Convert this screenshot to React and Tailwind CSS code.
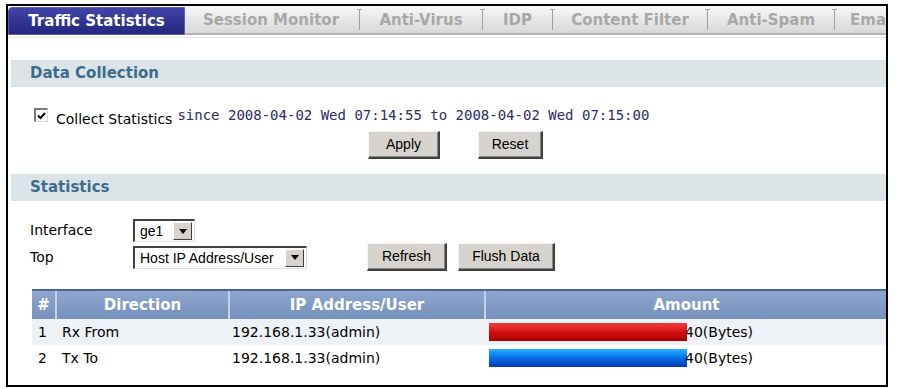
import React from "react";

const tabs = [
    { label: "Session Monitor", w: "w-[177px]" },
    { label: "Anti-Virus", w: "w-[123px]" },
    { label: "IDP", w: "w-[70px]" },
    { label: "Content Filter", w: "w-[155px]" },
    { label: "Anti-Spam", w: "w-[127px]" },
    { label: "Email Report", w: "w-[140px]" },
];

const rows = [
    { n: 1, dir: "Rx From", ip: "192.168.1.33(admin)", bar: "from-[#f23a3a] via-[#d41010] to-[#a80000]", bg: "bg-[#eef1f6]" },
    { n: 2, dir: "Tx To", ip: "192.168.1.33(admin)", bar: "from-[#2ab0ff] via-[#0a6ee8] to-[#0638b8]", bg: "bg-white" },
];

function Sep() {
    return (
        <div className="flex flex-col items-center w-[5px] h-full pt-[2px] pb-[3px] shrink-0">
            <div className="h-[1px] w-[5px] bg-[#a0a0a0]" />
            <div className="flex-1 w-[1px] bg-[#a0a0a0]" />
        </div>
    );
}

function Button({ children, w }) {
    return (
        <button
            className={`${w} h-[28px] bg-[#d6d3ce] border-t border-l border-t-[#f4f4f4] border-l-[#f4f4f4] border-r-2 border-b-2 border-r-[#404040] border-b-[#404040] shadow-[inset_-1px_-1px_0_#8a8a8a] font-['Liberation_Sans',Arial,sans-serif] text-[14px] text-black`}
        >
            {children}
        </button>
    );
}

function Select({ value, w }) {
    return (
        <div
            className={`${w} h-[23px] flex items-center bg-white border-t-2 border-l-2 border-t-[#404040] border-l-[#404040] border-r border-b border-r-[#e0e0e0] border-b-[#e0e0e0]`}
        >
            <span className="flex-1 pl-[5px] font-['Liberation_Sans',Arial,sans-serif] text-[14px] leading-none">
                {value}
            </span>
            <div className="w-[19px] h-[18px] mr-[2px] flex items-center justify-center bg-[#d6d3ce] border-t border-l border-t-white border-l-white border-r border-b border-r-[#404040] border-b-[#404040]">
                <svg width="8" height="5" viewBox="0 0 8 5">
                    <path d="M0 0h8L4 5z" fill="#000" />
                </svg>
            </div>
        </div>
    );
}

function SectionBar({ title }) {
    return (
        <div className="ml-[3px] h-[27px] flex items-center pl-[19px] bg-[#dde4e8] text-[#3d6c8d] font-bold text-[15px]">
            {title}
        </div>
    );
}

export default function App() {
    return (
        <div className="w-[898px] h-[389px] bg-white overflow-hidden font-['DejaVu_Sans',Verdana,sans-serif] text-[14px] text-black">
            <div className="h-[4px]" />
            <div className="ml-[6px] w-[882px] h-[383px] border-2 border-black flex flex-col overflow-hidden">
                {/* tabs */}
                <div className="mt-[1px] h-[28px] flex shrink-0 overflow-hidden">
                    <div className="w-[177px] shrink-0 flex items-center justify-center rounded-tl-[4px] bg-linear-to-b from-[#4245a8] to-[#24267e] border border-[#5a5db8] text-white font-bold text-[15px]">
                        Traffic Statistics
                    </div>
                    {tabs.map((t) => (
                        <div
                            key={t.label}
                            className={`${t.w} shrink-0 flex bg-linear-to-b from-[#f6f6f6] to-[#d8d8d8] border-b-2 border-[#b4b4b4]`}
                        >
                            <div className="flex-1 flex items-center justify-center text-[#a8a8a8] font-bold text-[15px] whitespace-nowrap">
                                {t.label}
                            </div>
                            <Sep />
                        </div>
                    ))}
                </div>
                <div className="mt-[2px] h-[1px] bg-[#e6e6e6]" />

                {/* data collection */}
                <div className="mt-[22px]">
                    <SectionBar title="Data Collection" />
                </div>
                <div className="mt-[21px] flex items-start pl-[26px]">
                    <div className="w-[14px] h-[14px] flex items-center justify-center bg-white border-t-2 border-l-2 border-t-[#7a7a7a] border-l-[#7a7a7a] border-r border-b border-r-[#d8d8d8] border-b-[#d8d8d8]">
                        <svg width="9" height="8" viewBox="0 0 9 8">
                            <path d="M1 3.5l2.5 2.5L8 1" stroke="#000" strokeWidth="2" fill="none" />
                        </svg>
                    </div>
                    <span className="ml-[8px] mt-[3px] leading-[17px]">Collect Statistics</span>
                    <span className="ml-[5px] mt-[-1px] leading-[17px] font-['DejaVu_Sans_Mono',monospace] text-[#2c2c68] whitespace-nowrap">
                        since 2008-04-02 Wed 07:14:55 to 2008-04-02 Wed 07:15:00
                    </span>
                </div>
                <div className="mt-[3px] flex pl-[360px] gap-[38px]">
                    <Button w="w-[72px]">Apply</Button>
                    <Button w="w-[65px]">Reset</Button>
                </div>

                {/* statistics */}
                <div className="mt-[15px]">
                    <SectionBar title="Statistics" />
                </div>
                <div className="mt-[18px] flex items-center pl-[22px]">
                    <span className="w-[103px]">Interface</span>
                    <Select value="ge1" w="w-[62px]" />
                </div>
                <div className="mt-[1px] flex items-center pl-[22px]">
                    <span className="w-[103px]">Top</span>
                    <Select value="Host IP Address/User" w="w-[174px]" />
                    <div className="ml-[60px] flex gap-[11px]">
                        <Button w="w-[80px]">Refresh</Button>
                        <Button w="w-[97px]">Flush Data</Button>
                    </div>
                </div>

                {/* table */}
                <div className="mt-[18px] ml-[24px] w-[855px]">
                    <div className="grid grid-cols-[25px_173px_256px_401px] h-[30px] border-t-2 border-[#4d6697] bg-linear-to-b from-[#8ea7cf] to-[#7690bd] text-white font-bold text-[15px]">
                        <div className="flex items-center justify-center border-r-2 border-[#c6d2e6]">#</div>
                        <div className="flex items-center justify-center border-r-2 border-[#c6d2e6]">Direction</div>
                        <div className="flex items-center justify-center border-r-2 border-[#c6d2e6]">IP Address/User</div>
                        <div className="flex items-center justify-center">Amount</div>
                    </div>
                    {rows.map((r) => (
                        <div key={r.n} className={`grid grid-cols-[25px_173px_256px_401px] h-[26px] items-center ${r.bg}`}>
                            <div className="pl-[6px]">{r.n}</div>
                            <div className="pl-[5px]">{r.dir}</div>
                            <div className="pl-[2px]">{r.ip}</div>
                            <div className="flex items-center pl-[3px]">
                                <div className={`w-[198px] h-[18px] bg-linear-to-b ${r.bar}`} />
                                <span className="ml-[-2px]">40(Bytes)</span>
                            </div>
                        </div>
                    ))}
                </div>
            </div>
        </div>
    );
}
